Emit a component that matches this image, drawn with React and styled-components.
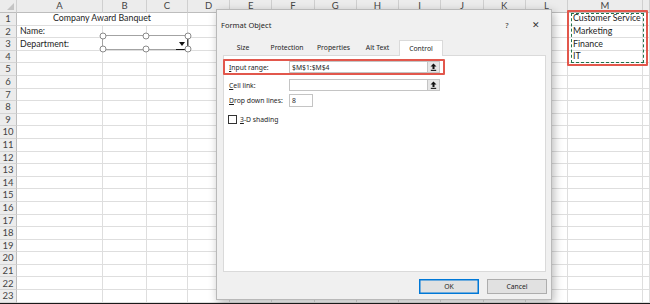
import React from "react";
import styled, { createGlobalStyle } from "styled-components";

const Global = createGlobalStyle`
  html, body { margin: 0; padding: 0; background: #fff; overflow: hidden; }
  * { box-sizing: border-box; }
`;

const COLS = ["", "A", "B", "C", "D", "E", "F", "G", "H", "I", "J", "K", "L", "M", ""];
const ROWS = 23;

const CELLS = {
  "1-1": { text: "Company Award Banquet", span: 3, align: "center" },
  "2-1": { text: "Name:" },
  "3-1": { text: "Department:" },
  "1-13": { text: "Customer Service", inset: 5 },
  "2-13": { text: "Marketing", inset: 5 },
  "3-13": { text: "Finance", inset: 5 },
  "4-13": { text: "IT", inset: 5 },
};

const Screen = styled.div`
  position: relative;
  width: 650px;
  height: 304px;
  overflow: hidden;
  border-bottom: 1px solid #1a1a1a;
  font-family: Lato, "Liberation Sans", sans-serif;
`;

const Grid = styled.div`
  display: grid;
  grid-template-columns: 17px 86px 44px 41px repeat(9, 42.22px) 75px 1fr;
  grid-template-rows: 13px repeat(${ROWS}, 12.6px);
  width: 650px;
`;

const ColHead = styled.div`
  background: #ececec;
  border-right: 1px solid #cfcfcf;
  border-bottom: 1px solid #bdbdbd;
  color: #444;
  font-size: 9.5px;
  display: flex;
  align-items: center;
  justify-content: center;
  padding-bottom: 2px;
`;

const Corner = styled(ColHead)`
  position: relative;
  &::after {
    content: "";
    position: absolute;
    right: 2px;
    bottom: 2px;
    border-left: 7px solid transparent;
    border-bottom: 7px solid #c4c4c4;
  }
`;

const RowHead = styled.div`
  background: #ececec;
  border-right: 1px solid #bdbdbd;
  border-bottom: 1px solid #d4d4d4;
  color: #444;
  font-size: 9.5px;
  display: flex;
  align-items: center;
  justify-content: center;
  line-height: 1;
`;

const Cell = styled.div`
  grid-column: span ${(p) => p.$span || 1};
  border-right: 1px solid #dedede;
  border-bottom: 1px solid #dedede;
  font-size: 8.8px;
  color: #1c1c1c;
  display: flex;
  align-items: center;
  justify-content: ${(p) => (p.$align === "center" ? "center" : "flex-start")};
  padding-left: ${(p) => (p.$align === "center" ? 0 : p.$inset || 3)}px;
  white-space: nowrap;
  overflow: visible;
  line-height: 1;
`;

/* overlays on the sheet */
const RangeMark = styled.div`
  position: absolute;
  left: 567px;
  top: 10px;
  width: 81px;
  height: 56px;
  border: 2px solid #e2574c;
  border-radius: 1px;
`;

const Ants = styled.div`
  position: absolute;
  left: 571px;
  top: 13px;
  width: 73px;
  height: 50px;
  border: 1px dashed #24734a;
`;

const Combo = styled.div`
  position: absolute;
  left: 102px;
  top: 35px;
  width: 87px;
  height: 15px;
  border: 1px solid #a3a3a3;
  background: #fff;
`;

const Handle = styled.span`
  position: absolute;
  width: 7px;
  height: 7px;
  border-radius: 50%;
  border: 1px solid #8a8a8a;
  background: #fff;
  left: ${(p) => p.$x}%;
  top: ${(p) => p.$y}%;
  transform: translate(-50%, -50%);
`;

const ComboArrow = styled.span`
  position: absolute;
  right: 0;
  top: 3px;
  width: 12px;
  height: 11px;
  border-bottom: 1.5px solid #111;
  border-right: 1px solid #444;
  display: flex;
  align-items: center;
  justify-content: center;
  &::before {
    content: "";
    border-left: 3.5px solid transparent;
    border-right: 3.5px solid transparent;
    border-top: 4px solid #111;
  }
`;

/* dialog */
const Dialog = styled.div`
  position: absolute;
  left: 216px;
  top: 9px;
  width: 336px;
  height: 291px;
  background: #f0f0f0;
  border: 1px solid #b9b9b9;
  box-shadow: 2px 3px 9px rgba(0, 0, 0, 0.28);
  display: flex;
  flex-direction: column;
  font-family: "Noto Sans", "Open Sans", sans-serif;
  color: #1e1e1e;
`;

const TitleBar = styled.div`
  height: 29px;
  display: flex;
  align-items: center;
  padding-left: 4px;
  font-size: 7.5px;
`;

const Title = styled.div`
  flex: 1;
`;

const TitleBtn = styled.div`
  width: ${(p) => p.$w}px;
  margin-right: ${(p) => p.$mr || 0}px;
  text-align: center;
  font-size: ${(p) => p.$size}px;
  color: #333;
`;

const Tabs = styled.div`
  height: 16px;
  display: flex;
  padding-left: 6px;
  position: relative;
  z-index: 1;
`;

const Tab = styled.div`
  width: ${(p) => p.$w}px;
  font-size: 6.8px;
  display: flex;
  align-items: center;
  justify-content: center;
  color: #222;
  margin-top: 1px;
  ${(p) =>
    p.$active &&
    `
    background: #fff;
    border: 1px solid #dadada;
    border-bottom: none;
    height: 16px;
  `}
`;

const Panel = styled.div`
  height: 217px;
  margin: 0 5px 0 6px;
  background: #fff;
  border: 1px solid #dadada;
  padding-top: 2px;
  display: flex;
  flex-direction: column;
`;

const FieldRow = styled.div`
  width: 222px;
  height: ${(p) => p.$h || 16}px;
  margin-top: ${(p) => p.$mt || 0}px;
  margin-left: -1px;
  border: 2px solid ${(p) => (p.$highlight ? "#e2574c" : "transparent")};
  border-radius: 1px;
  display: flex;
  align-items: center;
  padding-left: 4px;
  font-size: 6.8px;
  color: #1e1e1e;
`;

const Label = styled.div`
  width: 60px;
  flex: none;
  u { text-decoration-thickness: 0.5px; text-underline-offset: 1px; }
`;

const Field = styled.div`
  width: ${(p) => p.$w}px;
  height: ${(p) => p.$h || 12}px;
  border: 1px solid #c4c4c4;
  background: #fff;
  display: flex;
  align-items: center;
  padding-left: 2px;
  font-size: 6.8px;
`;

const FieldText = styled.div`
  flex: 1;
`;

const PickBtn = styled.div`
  width: 12px;
  height: 100%;
  background: #e6e6e6;
  border-left: 1px solid #c4c4c4;
  display: flex;
  align-items: center;
  justify-content: center;
`;

const CheckRow = styled.div`
  height: 14px;
  margin-top: 5px;
  display: flex;
  align-items: center;
  padding-left: 4px;
  gap: 3px;
  font-size: 6.8px;
  color: #1e1e1e;
  u { text-decoration-thickness: 0.5px; text-underline-offset: 1px; }
`;

const Box = styled.span`
  width: 9px;
  height: 9px;
  border: 1px solid #333;
  background: #fff;
`;

const Footer = styled.div`
  flex: 1;
  display: flex;
  justify-content: flex-end;
  align-items: flex-start;
  padding: 7px 4px 0 0;
  gap: 8px;
`;

const Button = styled.div`
  width: 60px;
  height: 15px;
  background: #e1e1e1;
  border: 1px solid ${(p) => (p.$primary ? "#0078d7" : "#adadad")};
  box-shadow: ${(p) => (p.$primary ? "inset 0 0 0 0.5px #0078d7" : "none")};
  font-size: 6.8px;
  display: flex;
  align-items: center;
  justify-content: center;
  color: #222;
`;

const PickIcon = () => (
  <svg width="7" height="8" viewBox="0 0 7 8">
    <path d="M3.5 0.5 L6.5 3.6 H4.5 V6 H2.5 V3.6 H0.5 Z" fill="#111" />
    <rect x="0.8" y="6.8" width="5.4" height="1.1" fill="#111" />
  </svg>
);

const TABS = [
  { name: "Size", w: 40 },
  { name: "Protection", w: 48 },
  { name: "Properties", w: 45 },
  { name: "Alt Text", w: 43 },
  { name: "Control", w: 44, active: true },
];

const HANDLES = [
  [0, 0], [50, 0], [100, 0],
  [0, 100], [50, 100], [100, 100],
];

export default function App() {
  const cells = [];
  COLS.forEach((c, i) =>
    cells.push(i === 0 ? <Corner key={`h${i}`} /> : <ColHead key={`h${i}`}>{c}</ColHead>)
  );
  for (let r = 1; r <= ROWS; r++) {
    cells.push(<RowHead key={`r${r}`}>{r}</RowHead>);
    let c = 1;
    while (c < COLS.length) {
      const d = CELLS[`${r}-${c}`];
      cells.push(
        <Cell key={`${r}-${c}`} $span={d?.span} $align={d?.align} $inset={d?.inset}>
          {d?.text}
        </Cell>
      );
      c += d?.span || 1;
    }
  }

  return (
    <>
      <Global />
      <Screen>
        <Grid>{cells}</Grid>

        <Combo>
          <ComboArrow />
          {HANDLES.map(([x, y], i) => (
            <Handle key={i} $x={x} $y={y} />
          ))}
        </Combo>

        <Ants />
        <RangeMark />

        <Dialog>
          <TitleBar>
            <Title>Format Object</Title>
            <TitleBtn $w={12} $size={7.5} $mr={8}>?</TitleBtn>
            <TitleBtn $w={30} $size={9}>✕</TitleBtn>
          </TitleBar>
          <Tabs>
            {TABS.map((t) => (
              <Tab key={t.name} $w={t.w} $active={t.active}>
                {t.name}
              </Tab>
            ))}
          </Tabs>
          <Panel>
            <FieldRow $highlight $mt={1}>
              <Label><u>I</u>nput range:</Label>
              <Field $w={151}>
                <FieldText>$M$1:$M$4</FieldText>
                <PickBtn><PickIcon /></PickBtn>
              </Field>
            </FieldRow>
            <FieldRow $mt={2}>
              <Label><u>C</u>ell link:</Label>
              <Field $w={151}>
                <FieldText />
                <PickBtn><PickIcon /></PickBtn>
              </Field>
            </FieldRow>
            <FieldRow $h={14}>
              <Label><u>D</u>rop down lines:</Label>
              <Field $w={24} $h={13}>
                <FieldText>8</FieldText>
              </Field>
            </FieldRow>
            <CheckRow>
              <Box />
              <span><u>3</u>-D shading</span>
            </CheckRow>
          </Panel>
          <Footer>
            <Button $primary>OK</Button>
            <Button>Cancel</Button>
          </Footer>
        </Dialog>
      </Screen>
    </>
  );
}
